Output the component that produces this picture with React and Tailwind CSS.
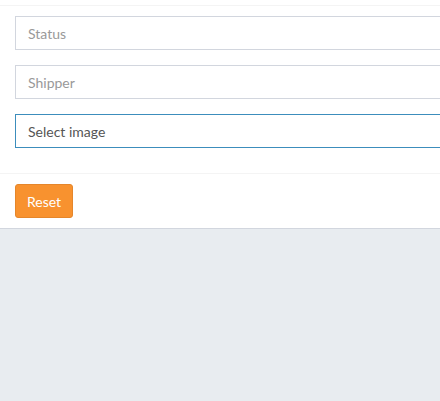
import React from "react";

const FIELDS = [
  { label: "Status", placeholder: true },
  { label: "Shipper", placeholder: true },
  { label: "Select image", placeholder: false, focused: true },
];

export default function App() {
  return (
    <div
      className="min-h-[401px] w-[440px] overflow-hidden bg-[#e8ecf0]"
      style={{ fontFamily: "Lato, 'Open Sans', sans-serif" }}
    >
      <div className="bg-white border-b border-[#d2d6de]">
        <div className="h-[6px] border-b border-[#f4f4f4]" />
        <div className="pl-[15px] pt-[10px] pb-[10px]">
          {FIELDS.map((f) => (
            <div key={f.label} className="mb-[15px]">
              <div
                className={
                  "h-[34px] w-[460px] flex items-center pl-[12px] text-[14px] border " +
                  (f.focused
                    ? "border-[#3c8dbc] text-[#555]"
                    : "border-[#d2d6de] text-[#999]")
                }
              >
                {f.label}
              </div>
            </div>
          ))}
        </div>
        <div className="border-t border-[#f4f4f4] px-[15px] py-[10px]">
          <button className="h-[34px] px-[11px] bg-[#f8922f] border border-[#e5862b] rounded-[3px] text-white text-[14px]">
            Reset
          </button>
        </div>
      </div>
    </div>
  );
}
